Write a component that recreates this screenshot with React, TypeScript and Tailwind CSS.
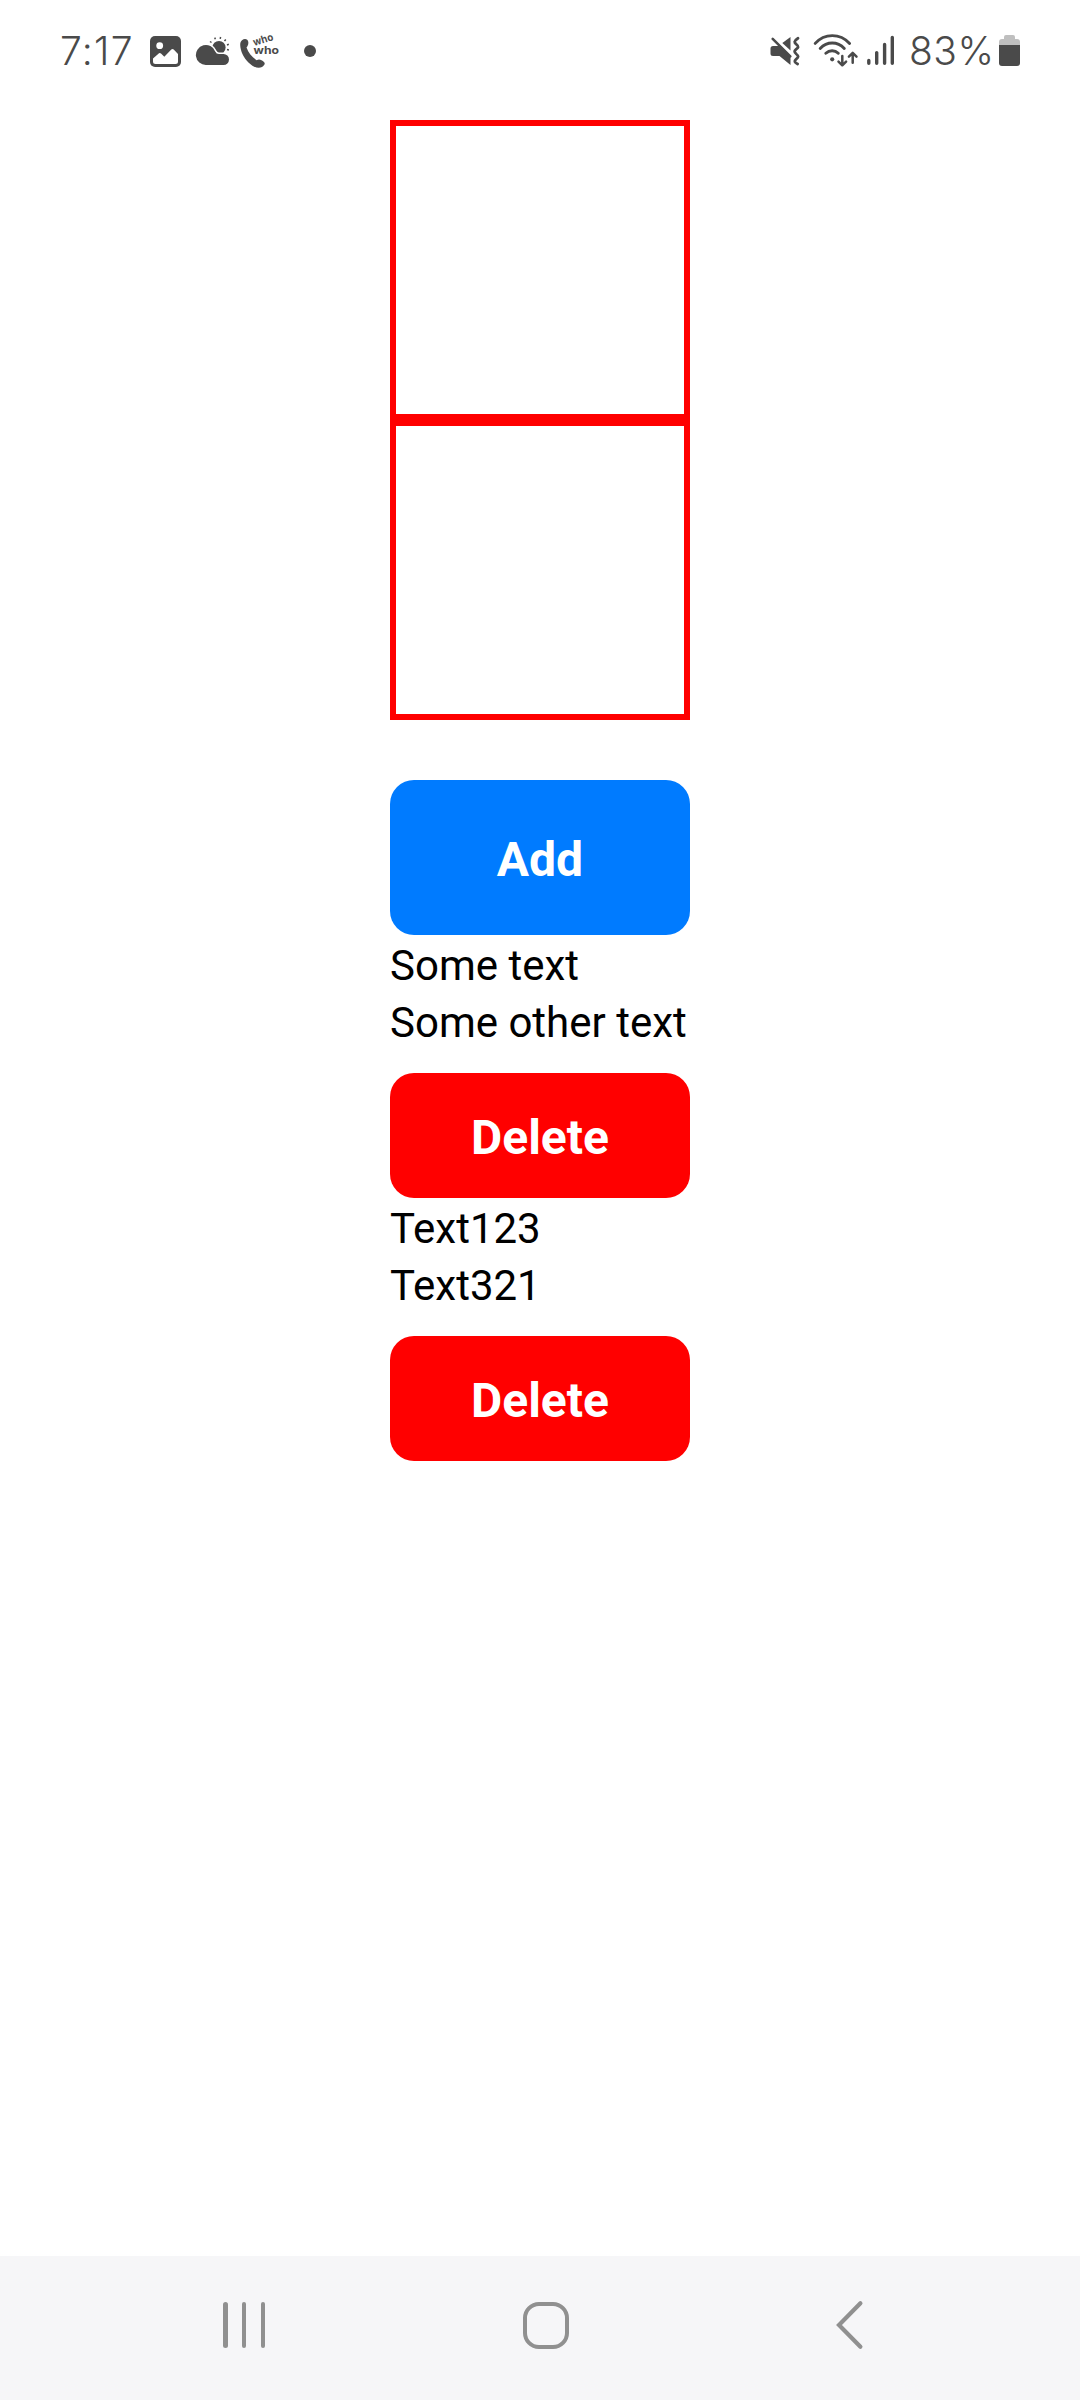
import type { ReactNode } from 'react';

const items = [
  { id: 1, lines: ['Some text', 'Some other text'] },
  { id: 2, lines: ['Text123', 'Text321'] },
];

function StatusIcon({ x, width, className = '', children }: { x: number; width: number; className?: string; children: ReactNode }) {
  return (
    <svg width={width} height={60} viewBox={`${x} 20 ${width} 60`} className={`block shrink-0 ${className}`} fill="none" stroke="none">
      {children}
    </svg>
  );
}

function StatusBar() {
  return (
    <header className="flex h-[120px] items-start pt-5 text-[#4a4a4a]">
      <span className="ml-[60px] mt-[1px] w-[90px] whitespace-nowrap font-[Inter,sans-serif] text-[39px] font-[350] leading-[60px] tracking-[1.3px]">7:17</span>

      {/* Picture */}
      <StatusIcon x={150} width={31}>
        <rect x="150" y="36" width="31" height="31" rx="5" fill="currentColor" />
        <circle cx="159.7" cy="45.7" r="3.4" fill="#fff" />
        <path d="M153 61.5V58.5L159 53.2Q160 52.6 161 53.5L164.3 56.8L171.3 49.5Q172.5 48.5 173.7 49.5L178 54V61.5Q178 64 175.5 64H155.5Q153 64 153 61.5Z" fill="#fff" />
      </StatusIcon>

      {/* Weather */}
      <StatusIcon x={195} width={36} className="ml-[14px]">
        <circle cx="219" cy="47.5" r="6.6" fill="currentColor" />
        <path d="M211.5 42.5L210 41.5M215.4 39.3L214.7 37.6M220.2 38.8L220.6 37M224.5 41L225.8 39.5M227 45L228.8 44.3M227 49.6L228.9 50" stroke="currentColor" strokeWidth="1.5" />
        <path d="M206 65A10 10 0 1 1 215.2 51.4Q216.3 54 219 54H223.5A5.5 5.5 0 0 1 223.5 65Z" fill="currentColor" stroke="#fff" strokeWidth="3" />
        <path d="M206 65A10 10 0 1 1 215.2 51.4Q216.3 54 219 54H223.5A5.5 5.5 0 0 1 223.5 65Z" fill="currentColor" />
      </StatusIcon>

      {/* Caller ID */}
      <StatusIcon x={239} width={42} className="ml-2">
        <path d="M242 40.3C244.5 38.2 248 39 248.3 42C248.5 44.5 247.8 46 246.5 47.5C248.5 53 252 57 256.7 60.2C258.5 59 261.5 59.2 264.2 62.2C265.6 64 264 65.6 262 67C258.5 69 253.5 67.3 248.7 62.7C243.5 57.6 240.4 51 240.2 45C240.2 43 240.6 41.5 242 40.3Z" fill="currentColor" />
        <text x="254.3" y="46" transform="rotate(-17 254.3 46)" fontFamily="Inter, sans-serif" fontWeight="700" fontSize="10.5" textLength="20.5" lengthAdjust="spacingAndGlyphs" fill="currentColor">who</text>
        <text x="253.6" y="54" fontFamily="Inter, sans-serif" fontWeight="700" fontSize="11" textLength="25.4" lengthAdjust="spacingAndGlyphs" fill="currentColor">who</text>
      </StatusIcon>

      <StatusIcon x={303} width={14} className="ml-[22px]">
        <circle cx="310" cy="51" r="6" fill="currentColor" />
      </StatusIcon>

      {/* Muted, vibrating */}
      <StatusIcon x={769} width={33} className="ml-auto">
        <path d="M773 46H780L790.5 56.5V65L779.5 56H773Q770.5 56 770.5 53.5V48.5Q770.5 46 773 46Z" fill="currentColor" />
        <path d="M790.5 37V50.5L782.3 43Z" fill="currentColor" />
        <path d="M772.7 38.8L790.3 56.3" stroke="currentColor" strokeWidth="2.6" strokeLinecap="round" />
        <path d="M798 38.2C793.5 41 794.2 42.6 796.3 44.3C799 46.6 798.6 47.5 796 49.4C793.9 51.1 794.3 52.3 796.3 54C798.8 56 798.8 57.2 796.2 59.2C794 61 794.2 62 797.6 64" stroke="currentColor" strokeWidth="2.8" strokeLinecap="round" />
      </StatusIcon>

      {/* Wi-Fi */}
      <StatusIcon x={813} width={46} className="ml-[11px]">
        <g stroke="currentColor" strokeWidth="2.9" strokeLinecap="round" strokeLinejoin="round">
          <path d="M815.2 43.4C824.5 33 840 33 849.6 43.4" />
          <path d="M820.2 48.5C827 41.2 837.5 41.2 844.3 48.5" />
          <path d="M825.8 53.3C829.5 49.8 834.8 49.8 838.3 53.3" />
          <path d="M842.3 56V65M838.5 61.6L842.3 65.3L846.1 61.6" strokeWidth="2.5" />
          <path d="M852.7 62.8V53M848.9 56.6L852.7 52.8L856.5 56.6" strokeWidth="2.5" />
        </g>
        <circle cx="832.2" cy="59.3" r="2.1" fill="currentColor" />
      </StatusIcon>

      {/* Signal */}
      <StatusIcon x={866} width={30} className="ml-[7px]">
        <path d="M868.8 60.4V63.2M876.7 52.6V63.2M884.6 44.4V63.2M892.3 37.5V63.2" stroke="currentColor" strokeWidth="3.4" strokeLinecap="round" />
      </StatusIcon>

      <span className="ml-[13px] mt-[1px] w-[89px] whitespace-nowrap font-[Inter,sans-serif] text-[39px] font-[350] leading-[60px] tracking-[0.5px]">83%</span>

      {/* Battery */}
      <StatusIcon x={998} width={24} className="mr-[58px]">
        <path d="M1002 39H1004V37Q1004 35 1006 35H1013Q1015 35 1015 37V39H1017Q1020 39 1020 42V46H999V42Q999 39 1002 39Z" fill="#bfbfbf" />
        <path d="M999 45H1020V63Q1020 66 1017 66H1002Q999 66 999 63Z" fill="currentColor" />
      </StatusIcon>
    </header>
  );
}

function NavigationBar() {
  return (
    <nav className="flex h-36 items-center bg-[#f6f6f8] text-[#909090]">
      <button className="ml-[223px] mt-[-6px] flex h-[46px] w-[43px] justify-between pr-px">
        <span className="h-[46px] w-[4.5px] rounded-full bg-current" />
        <span className="h-[46px] w-[4.5px] rounded-full bg-current" />
        <span className="h-[46px] w-[4.5px] rounded-full bg-current" />
      </button>
      <button className="ml-[257px] mt-[-6px] h-[47px] w-[46px] rounded-2xl border-4 border-current" />
      <button className="ml-[265px] mt-[-6px]">
        <svg width="32" height="50" viewBox="834 2300 32 50" className="block" fill="none" stroke="currentColor" strokeWidth="4.2" strokeLinecap="round">
          <path d="M860.4 2303.2L839 2325L860.4 2346.8" />
        </svg>
      </button>
    </nav>
  );
}

export default function App() {
  return (
    <div className="flex h-[2400px] w-[1080px] flex-col overflow-hidden bg-white font-[Roboto,sans-serif]">
      <StatusBar />
      <main className="mx-auto flex w-[300px] flex-1 flex-col">
        <input aria-label="First text" className="block h-[300px] w-full border-6 border-[#ff0000] outline-none" />
        <input aria-label="Second text" className="block h-[300px] w-full border-6 border-[#ff0000] outline-none" />
        <button className="mt-[60px] h-[155px] rounded-3xl bg-[#007bff] pt-1 text-5xl font-bold text-white">Add</button>
        {items.map((item) => (
          <section key={item.id} className="flex flex-col pt-0.5 text-[42px] leading-[57px] text-black">
            {item.lines.map((line) => (
              <p key={line} className="whitespace-nowrap">{line}</p>
            ))}
            <button className="mt-[22px] h-[125px] rounded-3xl bg-[#ff0000] pt-[5px] text-5xl font-bold text-white">Delete</button>
          </section>
        ))}
      </main>
      <NavigationBar />
    </div>
  );
}
